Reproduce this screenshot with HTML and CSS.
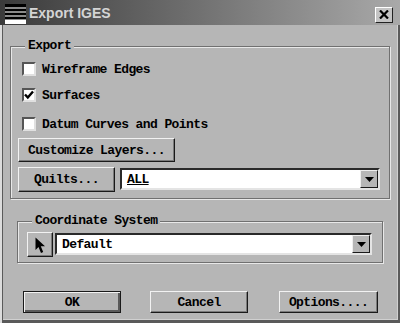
FILE: index.html
```html
<!DOCTYPE html>
<html>
<head lang="en">
    <meta charset="utf-8">
    <title>Export IGES</title>
    <link rel="stylesheet" href="styles.css">
</head>
<body>
<div class="window">
    <div class="title-bar">
        <svg class="sys-icon" width="21" height="20" viewBox="0 0 21 20">
            <rect x="0" y="0" width="21" height="20" fill="#8a8a8a"/>
            <rect x="0" y="0" width="21" height="3" fill="#000"/>
            <rect x="0" y="5" width="21" height="2" fill="#000"/>
            <rect x="0" y="9" width="21" height="2" fill="#000"/>
            <rect x="0" y="13" width="21" height="2" fill="#000"/>
            <rect x="0" y="16" width="21" height="4" fill="#fff"/>
        </svg>
        <span class="title">Export IGES</span>
        <div class="close">
            <svg width="10" height="9" viewBox="0 0 10 9">
                <path d="M1 0.5 L9 8.5 M9 0.5 L1 8.5" stroke="#000" stroke-width="2.2"/>
            </svg>
        </div>
    </div>

    <div class="content">
        <div class="group export">
            <div class="legend">Export</div>
            <div class="check-row row1">
                <span class="check"></span>
                <span class="label">Wireframe Edges</span>
            </div>
            <div class="check-row row2">
                <span class="check">
                    <svg width="10" height="10" viewBox="0 0 10 10">
                        <path d="M1 4.5 L3.8 7.5 L9 1.5" stroke="#000" stroke-width="2.4" fill="none"/>
                    </svg>
                </span>
                <span class="label">Surfaces</span>
            </div>
            <div class="check-row row3">
                <span class="check"></span>
                <span class="label">Datum Curves and Points</span>
            </div>
            <div class="button customize">Customize Layers...</div>
            <div class="quilts-row">
                <div class="button quilts">Quilts...</div>
                <div class="combo all">
                    <span class="combo-text">ALL</span>
                    <span class="drop">
                        <svg width="9" height="5" viewBox="0 0 9 5"><path d="M0 0 L9 0 L4.5 5 Z" fill="#000"/></svg>
                    </span>
                </div>
            </div>
        </div>

        <div class="group coord">
            <div class="legend">Coordinate System</div>
            <div class="coord-row">
                <div class="button pick">
                    <svg width="11" height="17" viewBox="0 0 11 17">
                        <path d="M0.5 0.5 L0.5 13 L3.5 10 L6 16 L8.2 15 L5.8 9.3 L10 9.3 Z" fill="#000"/>
                    </svg>
                </div>
                <div class="combo default">
                    <span class="combo-text">Default</span>
                    <span class="drop">
                        <svg width="9" height="5" viewBox="0 0 9 5"><path d="M0 0 L9 0 L4.5 5 Z" fill="#000"/></svg>
                    </span>
                </div>
            </div>
        </div>

        <div class="actions">
            <div class="button action ok">OK</div>
            <div class="button action cancel">Cancel</div>
            <div class="button action options">Options....</div>
        </div>
    </div>
</div>
</body>
</html>
```

FILE: styles.css
```css
body {
    margin: 0;
    background: #b6b6b6;
}

.window {
    width: 400px;
    height: 323px;
    background: #b6b6b6;
    font-family: "Liberation Mono", "DejaVu Sans Mono", monospace;
    font-weight: bold;
    font-size: 13px;
    letter-spacing: -0.6px;
    color: #000;
    box-shadow: inset 2px 0 0 #dcdcdc, inset 3px 0 0 #5a5a5a,
                inset -2px -3px 0 #5a5a5a, inset -3px -4px 0 #d0d0d0;
    overflow: hidden;
}

.title-bar {
    height: 25px;
    display: flex;
    align-items: center;
    background: linear-gradient(to right, #3a3a3a, #666 40%, #a9a9a9);
}

.sys-icon {
    margin-left: 5px;
    margin-top: 3px;
}

.title {
    margin-left: 3px;
    font-family: "Liberation Sans", Arial, sans-serif;
    font-weight: bold;
    font-size: 14px;
    letter-spacing: 0;
    color: #d4d4d4;
}

.close {
    margin-left: auto;
    margin-right: 7px;
    margin-top: 4px;
    width: 18px;
    height: 16px;
    box-sizing: border-box;
    background: #c4c4c4;
    border: 1px solid;
    border-color: #fff #222 #222 #fff;
    display: flex;
    align-items: center;
    justify-content: center;
}

.content {
    padding: 21px 10px 0 10px;
}

.group {
    box-sizing: border-box;
    border: 1px solid #707070;
    box-shadow: inset 1px 1px 0 #e8e8e8, 1px 1px 0 #e8e8e8;
}

.group.export {
    height: 153px;
}

.group.coord {
    margin: 22px 7px 0 7px;
    height: 42px;
}

.legend {
    display: table;
    margin: -9px 0 0 14px;
    padding: 0 3px;
    line-height: 16px;
    background: #b6b6b6;
}

.check-row {
    height: 18px;
    display: flex;
    align-items: center;
    margin-left: 11px;
}

.row1 { margin-top: 6px; }
.row2 { margin-top: 8px; }
.row3 { margin-top: 11px; }

.check {
    width: 14px;
    height: 14px;
    box-sizing: border-box;
    background: #fff;
    border: 2px solid;
    border-color: #555 #e0e0e0 #e0e0e0 #555;
    display: flex;
    align-items: center;
    justify-content: center;
}

.check-row .label {
    margin-left: 6px;
}

.button {
    box-sizing: border-box;
    background: #b6b6b6;
    border: 1px solid;
    border-color: #f2f2f2 #1a1a1a #1a1a1a #f2f2f2;
    box-shadow: inset -1px -1px 0 #7a7a7a;
    display: flex;
    align-items: center;
    justify-content: center;
}

.customize {
    margin: 5px 0 0 7px;
    width: 157px;
    height: 24px;
}

.quilts-row {
    display: flex;
    align-items: flex-start;
    margin: 5px 0 0 7px;
}

.quilts {
    width: 97px;
    height: 25px;
}

.combo {
    box-sizing: border-box;
    height: 22px;
    background: #fff;
    border: 2px solid;
    border-color: #2a2a2a #e4e4e4 #e4e4e4 #2a2a2a;
    display: flex;
    align-items: center;
}

.combo.all {
    margin: 1px 0 0 5px;
    width: 260px;
}

.combo-text {
    margin-left: 5px;
    flex: 1;
}

.all .combo-text {
    text-decoration: underline;
}

.drop {
    width: 18px;
    height: 18px;
    box-sizing: border-box;
    background: #b6b6b6;
    border: 1px solid;
    border-color: #eee #1a1a1a #1a1a1a #eee;
    display: flex;
    align-items: center;
    justify-content: center;
}

.coord-row {
    display: flex;
    align-items: flex-start;
    margin: 3px 0 0 9px;
}

.pick {
    width: 26px;
    height: 25px;
}

.pick svg {
    margin: 2px 0 0 1px;
}

.combo.default {
    margin: 1px 0 0 2px;
    width: 317px;
}

.actions {
    display: flex;
    margin: 28px 0 0 13px;
}

.action {
    width: 98px;
    height: 22px;
}

.ok {
    border-color: #1a1a1a;
    box-shadow: inset 1px 1px 0 #f2f2f2, inset -2px -2px 0 #5a5a5a;
}

.cancel {
    margin-left: 29px;
}

.options {
    margin-left: 31px;
    width: 99px;
}
```
